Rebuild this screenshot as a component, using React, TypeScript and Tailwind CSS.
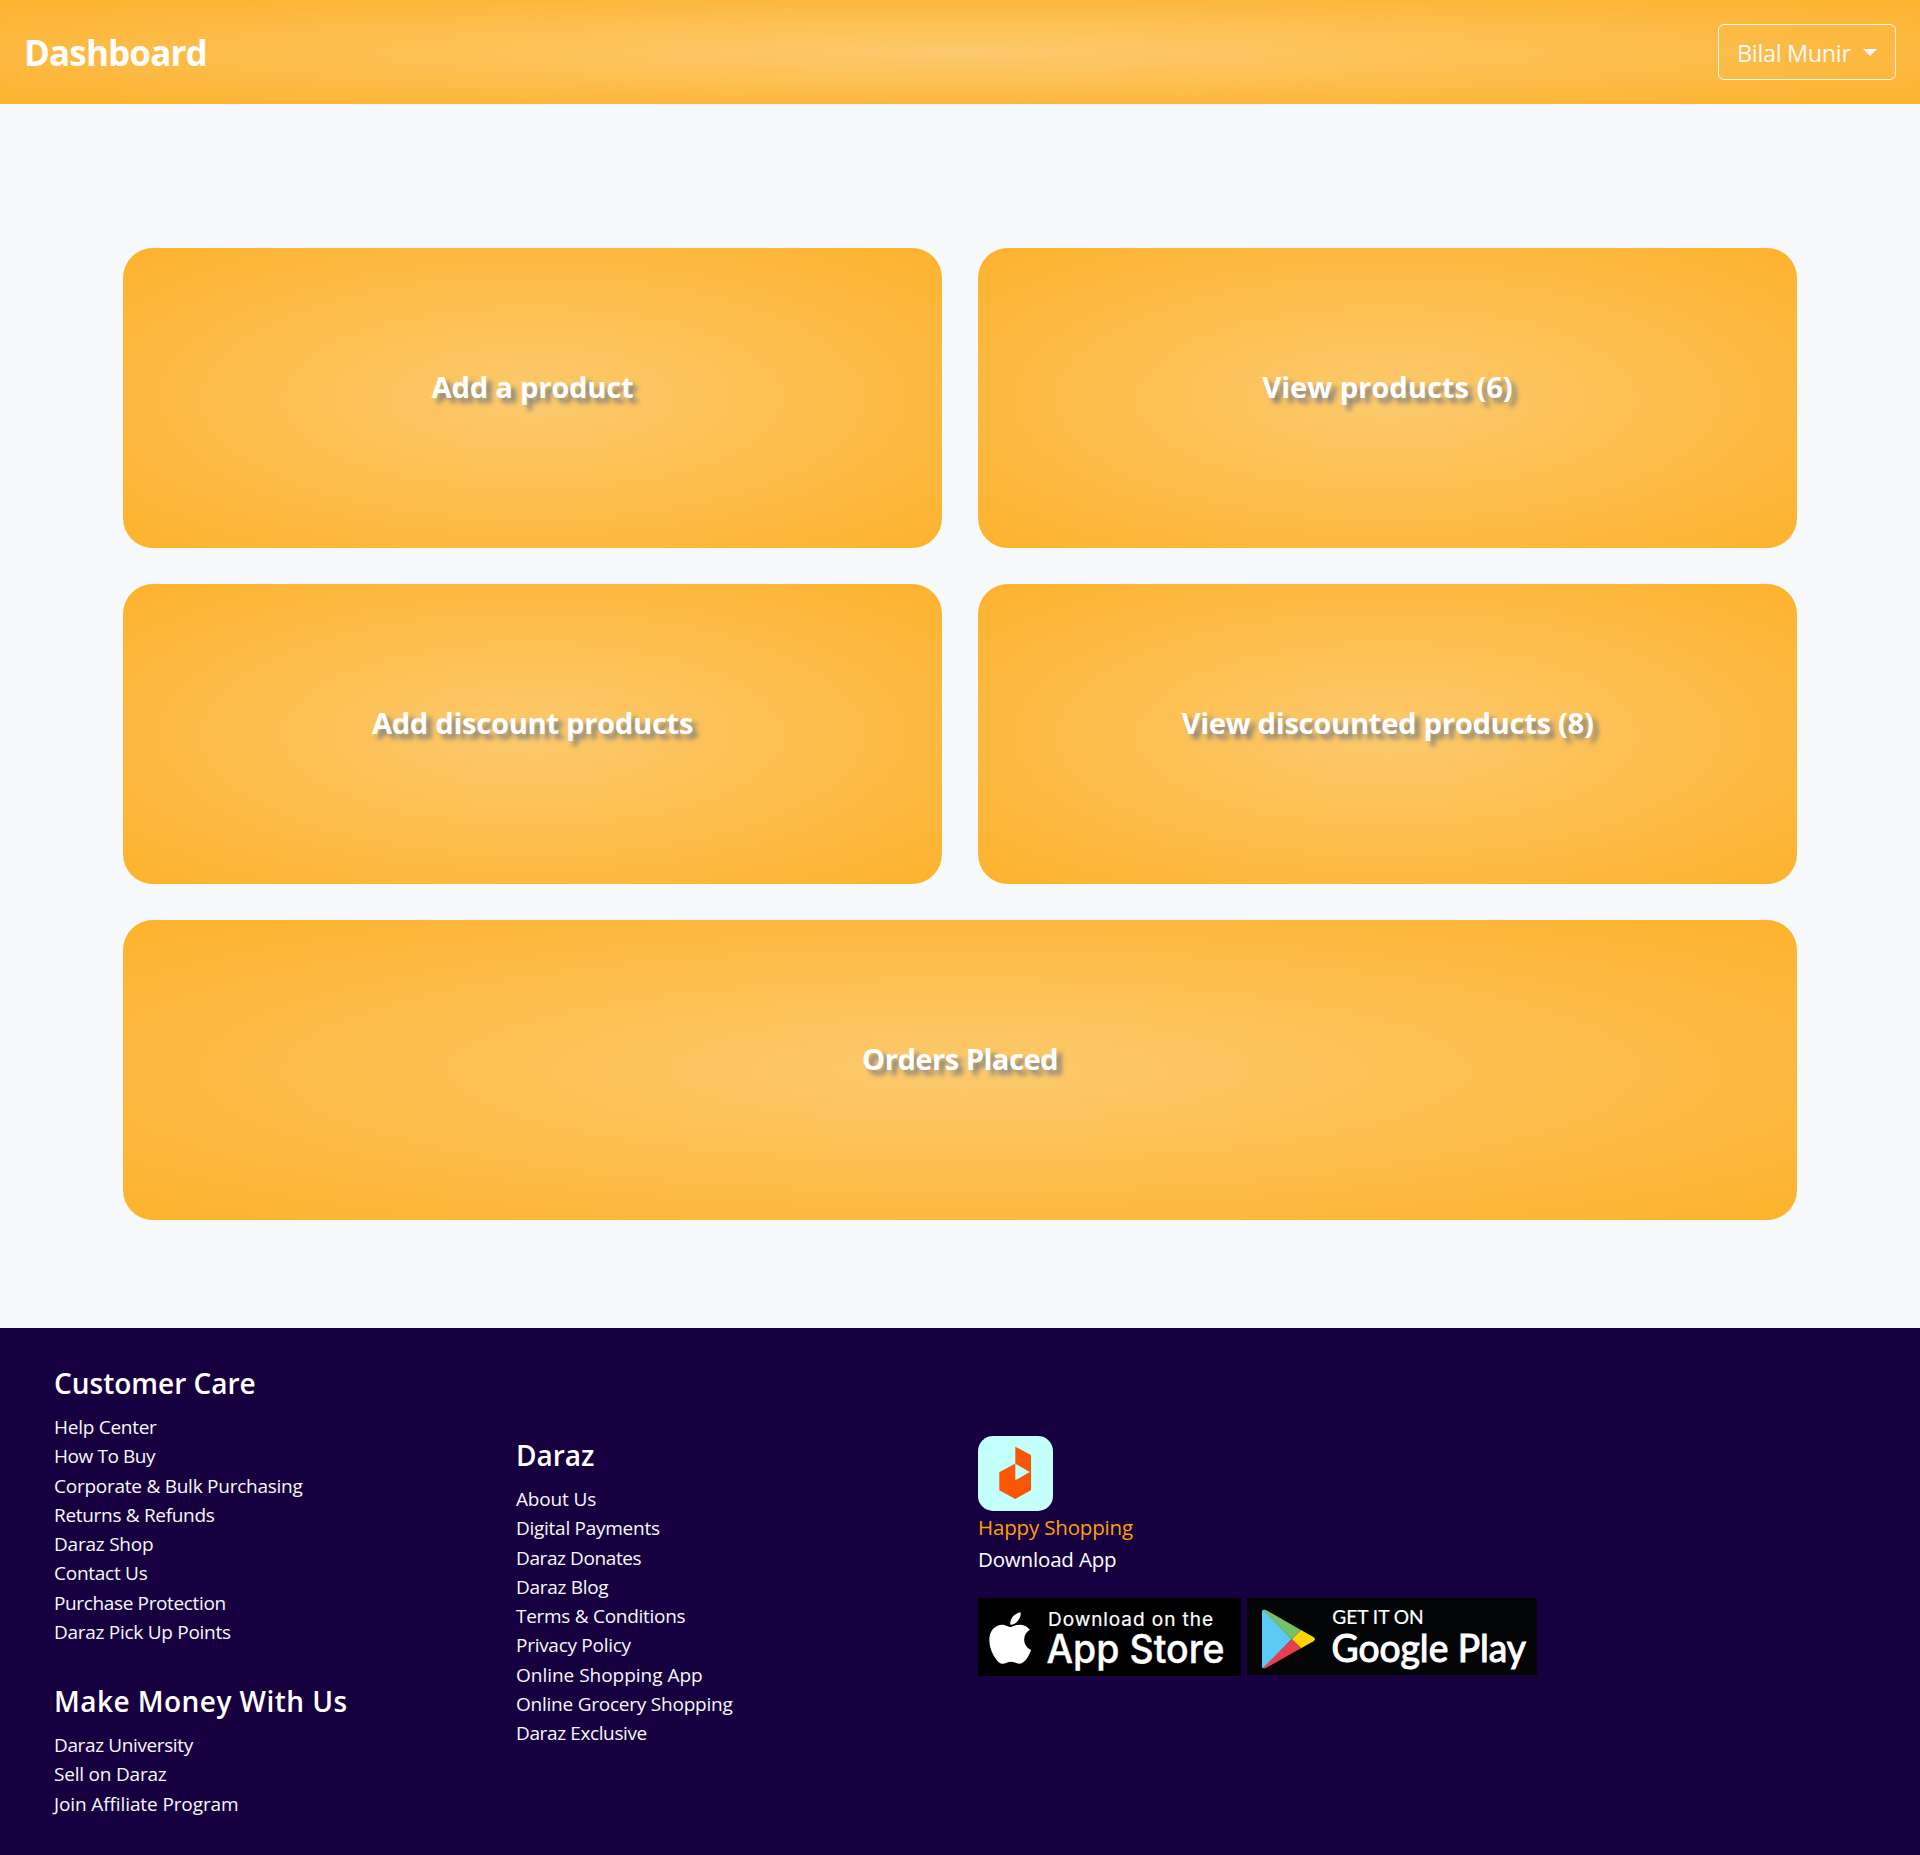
type Entry = [label: string, tracking: string];

const cards: { label: string; className: string; tracking: string }[] = [
  { label: 'Add a product', className: '', tracking: 'tracking-[-0.28px]' },
  { label: 'View products (6)', className: '', tracking: 'tracking-[-0.09px]' },
  { label: 'Add discount products', className: '', tracking: 'tracking-[-0.35px]' },
  { label: 'View discounted products (8)', className: '', tracking: 'tracking-[-0.34px]' },
  { label: 'Orders Placed', className: 'col-span-2', tracking: 'tracking-[-0.58px]' },
];

const customerCare: Entry[] = [
  ['Help Center', 'tracking-[-0.27px]'],
  ['How To Buy', 'tracking-[-0.42px]'],
  ['Corporate & Bulk Purchasing', 'tracking-[-0.25px]'],
  ['Returns & Refunds', 'tracking-[-0.31px]'],
  ['Daraz Shop', 'tracking-[-0.23px]'],
  ['Contact Us', 'tracking-[-0.26px]'],
  ['Purchase Protection', 'tracking-[-0.36px]'],
  ['Daraz Pick Up Points', 'tracking-[-0.28px]'],
];

const makeMoney: Entry[] = [
  ['Daraz University', 'tracking-[-0.38px]'],
  ['Sell on Daraz', 'tracking-[-0.21px]'],
  ['Join Affiliate Program', 'tracking-[-0.11px]'],
];

const daraz: Entry[] = [
  ['About Us', 'tracking-[-0.16px]'],
  ['Digital Payments', 'tracking-[-0.27px]'],
  ['Daraz Donates', 'tracking-[-0.4px]'],
  ['Daraz Blog', 'tracking-[-0.3px]'],
  ['Terms & Conditions', 'tracking-[-0.28px]'],
  ['Privacy Policy', 'tracking-[-0.28px]'],
  ['Online Shopping App', 'tracking-[-0.02px]'],
  ['Online Grocery Shopping', 'tracking-[-0.23px]'],
  ['Daraz Exclusive', 'tracking-[-0.38px]'],
];

function LinkGroup({ title, titleTracking = '', items }: { title: string; titleTracking?: string; items: Entry[] }) {
  return (
    <section>
      <h3 className={`mb-[13px] text-[28px] leading-[34px] font-semibold ${titleTracking}`}>{title}</h3>
      <ul className="text-[19px] leading-[29.25px] text-[#f8f9fa]">
        {items.map(([label, tracking]) => (
          <li key={label} className={tracking}>
            <a href="#">{label}</a>
          </li>
        ))}
      </ul>
    </section>
  );
}

function DarazLogo() {
  return (
    <svg className="block h-[75px] w-[75px] rounded-[15px] bg-[#c5fffb]" viewBox="0 0 75 75">
      <path fill="#f95706" d="M37.3 10.7 53 19v35.3L37.3 63l-16-8.7v-18l16-8.7z" />
      <path fill="#c5fffb" d="M37.3 27.7 51.7 36l-14.4 8.3z" />
    </svg>
  );
}

function AppStoreBadge() {
  return (
    <svg className="h-[78px] w-[263px] bg-black font-[Inter,sans-serif]" viewBox="0 0 263 78" fill="#fff">
      <g transform="translate(10.9 10.7) scale(0.1108 0.1147)">
        <path d="M318.7 268.7c-.2-36.7 16.4-64.4 50-84.8-18.8-26.9-47.2-41.7-84.7-44.6-35.5-2.8-74.3 20.7-88.5 20.7-15 0-49.4-19.7-76.4-19.7C63.3 141.2 4 184.8 4 273.5q0 39.3 14.4 81.2c12.8 36.7 59 126.7 107.2 125.2 25.2-.6 43-17.9 75.8-17.9 31.8 0 48.3 17.9 76.4 17.9 48.6-.7 90.4-82.5 102.6-119.3-65.2-30.7-61.7-90-61.7-91.9zm-56.6-164.2c27.3-32.4 24.8-61.9 24-72.5-24.1 1.4-52 16.4-67.9 34.9-17.5 19.8-27.8 44.3-25.6 71.9 26.1 2 49.9-11.4 69.5-34.3z" />
      </g>
      <text x="70" y="28" fontSize="19" fontWeight="400" stroke="#fff" strokeWidth="0.2" textLength="165" lengthAdjust="spacing">Download on the</text>
      <text x="68.5" y="65.3" fontSize="39" fontWeight="500" stroke="#fff" strokeWidth="0.4" textLength="178" lengthAdjust="spacingAndGlyphs">App Store</text>
    </svg>
  );
}

function GooglePlayBadge() {
  return (
    <svg className="h-[77px] w-[290px] bg-[#030507] font-[Lato,sans-serif]" viewBox="0 0 290 77" fill="#fff" stroke="#fff">
      <g stroke="none">
        <path fill="#5bc9f4" d="M15 13.5c0-1.2.7-1.8 1.7-1.5l28 29.3-28 28.8c-1 .2-1.7-.4-1.7-1.6z" />
        <path fill="#74c168" d="M16 12c.8-.5 1.9-.5 3 .1L54 32l-9.3 9.3z" />
        <path fill="#ffd400" d="M54 32l12.4 7c2.1 1.2 2.1 3.1 0 4.3L54 50.3l-9.3-9z" />
        <path fill="#ea3d50" d="M44.7 41.3l9.3 9L19 70c-1.1.6-2.2.6-3 0z" />
      </g>
      <text x="85.2" y="25.5" fontSize="19" strokeWidth="0.2" textLength="91.5" lengthAdjust="spacingAndGlyphs">GET IT ON</text>
      <text x="84.5" y="64" fontSize="38.5" strokeWidth="1.1" textLength="194.5" lengthAdjust="spacingAndGlyphs">Google Play</text>
    </svg>
  );
}

export default function App() {
  return (
    <div className="min-h-[1855px] bg-[#f8f9fa] font-['Open_Sans',sans-serif] text-white">
      <header className="flex h-[104px] items-center justify-between bg-[radial-gradient(#fcc96d,#fdb22c)] pr-6 pl-6">
        <h1 className="pt-0.5 text-[35px] leading-[44px] font-bold tracking-[-0.85px]">Dashboard</h1>
        <button className="flex h-14 w-[178px] items-center rounded-md border border-[#f8f9fa] pl-[18px] text-[23.5px] text-[#f8f9fa]">
          <span className="pt-1 tracking-[-0.36px]">Bilal Munir</span>
          <span className="ml-auto mr-[18px] border-x-[7px] border-t-[7px] border-x-transparent border-t-[#f8f9fa]" />
        </button>
      </header>

      <main className="grid grid-cols-2 gap-9 px-[123px] pt-36 pb-[108px]">
        {cards.map(({ label, className, tracking }) => (
          <a
            key={label}
            href="#"
            className={`flex h-[300px] items-center justify-center rounded-[30px] bg-[radial-gradient(#fcc96d,#fdb22c)] pb-[22px] ${className}`}
          >
            <h2 className={`text-[29.25px] leading-9 font-bold [text-shadow:5px_5px_5px_#808080] ${tracking}`}>{label}</h2>
          </a>
        ))}
      </main>

      <footer className="grid h-[527px] grid-cols-[462px_462px_1fr] items-start bg-[#170040] pt-[38px] pl-[54px]">
        <div className="flex flex-col gap-[37px]">
          <LinkGroup title="Customer Care" items={customerCare} />
          <LinkGroup title="Make Money With Us" titleTracking="tracking-[0.46px]" items={makeMoney} />
        </div>
        <div className="pt-[72px]">
          <LinkGroup title="Daraz" items={daraz} />
        </div>
        <div className="pt-[70px]">
          <DarazLogo />
          <p className="text-[20.5px] leading-8 tracking-[-0.17px] text-[#ff9f0a]">Happy Shopping</p>
          <p className="text-[20.5px] leading-8 tracking-[-0.17px]">Download App</p>
          <div className="mt-[23px] flex items-start gap-1.5">
            <AppStoreBadge />
            <GooglePlayBadge />
          </div>
        </div>
      </footer>
    </div>
  );
}
